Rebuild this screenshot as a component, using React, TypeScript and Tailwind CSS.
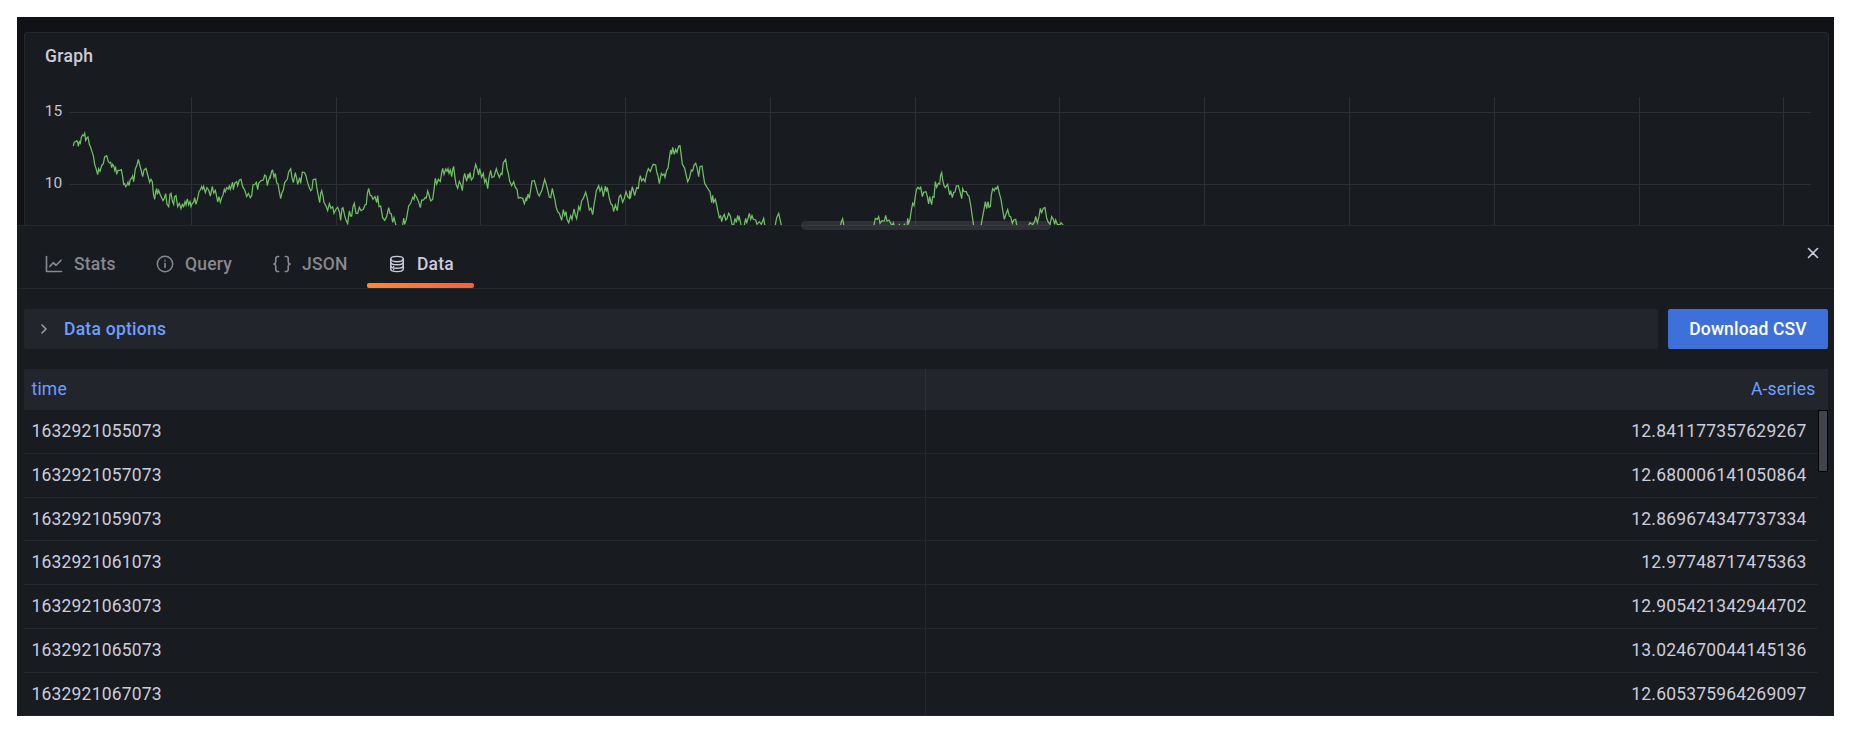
import React from "react";

type Segment = { dx: number; dy: number; pts: string };

// Series samples, stored in thirds of a pixel, one entry per captured stretch.
const segments: Segment[] = [
  {
    dx: 210,
    dy: 375,
    pts: "10,63 13,51 17,50 20,47 23,52 25,64 28,50 31,55 34,37 38,30 41,32 44,25 47,46 51,38 54,36 58,58 62,67 66,80 70,92 74,118 78,130 83,149 86,131 90,139 95,122 100,116 104,96 110,92 115,110 119,114 122,112 125,128 128,118 132,125 134,136 137,128 140,148 144,136 150,136 154,134 158,155 161,178 164,176 167,185 171,180 174,172 177,182 181,163 185,160 188,153 191,170 196,132 201,120 205,103 210,123 214,138 218,155 222,135 228,130 234,153 239,172 243,163 247,170 250,205 254,223 257,200 260,190 262,208 266,196 271,210 275,218 279,227 283,220 287,206 291,238 296,245 300,208 303,205 307,228 311,238 314,215 318,212 323,245 328,235 333,251 337,238 341,245 345,230 348,240 352,222 356,240 360,230 363,245 367,235 371,232 374,218 378,238 383,220 387,200 391,195 395,185 398,192 401,184 406,203 411,188 416,195 421,213 427,184 431,204 436,196 440,215 443,231 447,215 451,232 455,218 459,210 463,193 466,200 470,188 475,192 478,183 481,193 485,180 488,172 490,194 494,175 500,170 503,182 508,165 513,163 518,185 524,195 530,215 535,205 541,218 545,212 549,180 555,178 559,172 563,194 566,175 573,167 580,165 584,150 588,153 592,182 595,168 600,155",
  },
  {
    dx: 780,
    dy: 270,
    pts: "31,262 35,243 38,241 42,262 46,250 50,278 54,282 58,305 62,326 66,308 70,300 74,277 82,268 86,245 92,236 96,263 100,278 106,248 110,265 113,283 119,263 122,280 127,246 134,248 138,258 142,275 147,290 152,302 156,298 159,270 163,268 167,267 170,290 174,312 179,338 182,310 185,302 189,318 192,337 198,348 203,362 208,341 213,355 218,350 222,370 228,357 233,352 238,365 242,391 246,355 249,353 254,377 258,390 263,401 268,363 272,378 275,378 279,350 283,340 288,370 293,370 298,352 303,362 310,358 315,345 319,343 322,310 326,295 330,315 335,318 339,328 345,320 350,338 353,317 357,350 362,348 368,383 374,391 380,380 386,353 390,370 394,372 398,397 402,383 407,403 410,420 426,420 431,384 434,403 439,388 443,365 446,348 452,340 458,322 462,328 464,313 470,322 476,336 481,353 485,330 490,330 496,322 499,324 503,303 507,315 512,333 518,328 522,300 526,265 530,282 535,268 541,275 545,248 548,235 552,253 557,237 561,244 564,236 567,250 571,240 575,260 578,240 581,229 584,255 588,283 593,295 598,274 603,285 607,302 611,263 614,250 620,274 624,252 627,265 630,247 634,270 640,262 643,240 647,223 652,238 656,255 659,236 665,262 670,250 674,277 678,268 683,296 687,262 692,241 696,263 702,260 706,246 709,236 713,250 718,262 723,250 726,253 730,218 737,208 741,235 745,250 749,273 755,287 761,275 766,292 771,298 775,325 780,322 788,325 793,341 798,325 800,333 804,312 808,325 812,300 816,273 823,272 828,290 834,312",
  },
  {
    dx: 1560,
    dy: 270,
    pts: "58,318 62,308 66,300 70,285 74,268 78,280 83,300 88,322 92,323 97,295 100,310 105,330 108,350 113,365 118,370 125,391 130,359 134,376 138,365 141,388 146,398 152,377 156,388 162,357 166,375 170,386 176,350 180,360 185,332 190,325 197,307 202,325 208,360 213,355 218,374 222,345 226,322 229,302 236,287 240,303 245,292 250,320 256,288 259,305 262,292 268,325 273,342 277,345 281,365 286,345 292,362 297,322 302,315 308,337 313,325 318,305 323,320 328,325 329,302 331,325 337,290 344,317 350,293 355,295 358,270 361,257 365,273 370,266 375,275 380,250 385,236 391,245 396,230 400,223 407,225 410,245 414,258 418,281 424,250 428,256 432,252 435,262 440,240 444,235 448,205 452,180 455,193 458,172 463,193 467,178 471,187 476,168 480,167 483,190 487,222 494,235 499,258 503,275 508,265 514,240 518,243 522,226 527,220 531,232 536,260 540,230 546,228 550,255 554,280 560,290 566,300 570,305 575,338 578,316 581,337 586,328 590,345 594,365 598,383 602,378 605,395 609,380 613,373 617,390 621,386 626,370 631,378 636,403 641,405 645,385 649,398 653,376 656,388 658,382 663,404 668,420 672,410 677,385 680,400 688,370 692,388 696,377 700,388 707,390 711,403 718,395 724,403 731,385 736,415 764,415 770,383 776,370 780,388 785,410 790,450",
  },
  {
    dx: 2340,
    dy: 270,
    pts: "170,450 180,415 184,395 188,386 192,410 200,450 275,450 280,415 286,385 292,388 296,380 300,400 306,392 313,393 317,376 321,393 327,390 332,400 337,408 340,398 345,415 355,412 358,404 362,410 370,410 373,403 377,410 381,410 383,385 386,400 390,388 394,360 398,340 402,347 406,318 410,297 414,292 418,297 422,292 427,320 431,307 438,305 442,320 446,342 449,320 455,344 458,320 462,322 466,275 470,292 475,280 479,282 482,255 485,248 488,270 492,287 496,293 503,283 509,315 512,302 517,323 521,307 525,306 529,288 535,287 540,305 545,326 548,296 552,305 559,305 563,315 567,318 572,345 577,380 582,415 602,415 607,385 612,358 616,335 620,356 624,335 627,352 631,350 634,315 638,296 643,302 646,294 650,297 653,287 658,310 663,328 668,360 673,388 677,375 683,359 688,378 692,380 697,400 701,390 707,388 711,410 745,408 750,398 758,404 764,395 767,379 772,398 777,380 781,355 785,368 790,355 795,353 800,385 804,395 810,403 815,380 820,388 824,403 827,390 832,403 840,404 843,398 849,405 855,430",
  },
];

const linePoints = segments
  .flatMap((s) =>
    s.pts.split(" ").map((p) => {
      const [x, y] = p.split(",").map(Number);
      return `${((x + s.dx) / 3).toFixed(2)},${((y + s.dy) / 3).toFixed(2)}`;
    }),
  )
  .join(" ");

const gridX = [191, 336, 480, 625, 770, 915, 1059, 1204, 1349, 1494, 1639, 1783];

const rows: [string, string][] = [
  ["1632921055073", "12.841177357629267"],
  ["1632921057073", "12.680006141050864"],
  ["1632921059073", "12.869674347737334"],
  ["1632921061073", "12.97748717475363"],
  ["1632921063073", "12.905421342944702"],
  ["1632921065073", "13.024670044145136"],
  ["1632921067073", "12.605375964269097"],
];

const rowHeights = ["h-[44px]", "h-[44px]", "h-[43px]", "h-[44px]", "h-[44px]", "h-[44px]", "h-[43px]"];

function Icon({ children }: { children: React.ReactNode }) {
  return (
    <svg
      viewBox="0 0 24 24"
      className="h-5 w-5 shrink-0"
      fill="none"
      stroke="currentColor"
      strokeWidth="2"
      strokeLinecap="round"
      strokeLinejoin="round"
    >
      {children}
    </svg>
  );
}

const StatsIcon = () => (
  <Icon>
    <path d="M3 3v18h18" />
    <path d="M7 15l4-4.500 3.500 3L20.500 7.500" />
  </Icon>
);

const InfoIcon = () => (
  <Icon>
    <circle cx="12" cy="12" r="9.200" strokeWidth="1.800" />
    <path d="M12 11.500v4.500" />
    <circle cx="12" cy="8" r="0.300" />
  </Icon>
);

const BracketsIcon = () => (
  <Icon>
    <path d="M8 3H7a2.500 2.500 0 0 0-2.500 2.500v3.700A2.800 2.800 0 0 1 2.300 12a2.800 2.800 0 0 1 2.200 2.800v3.700A2.500 2.500 0 0 0 7 21h1" />
    <path d="M16 3h1a2.500 2.500 0 0 1 2.500 2.500v3.700a2.800 2.800 0 0 0 2.200 2.800 2.800 2.800 0 0 0-2.200 2.800v3.700A2.500 2.500 0 0 1 17 21h-1" />
  </Icon>
);

const DatabaseIcon = () => (
  <Icon>
    <g strokeWidth="1.700">
      <ellipse cx="12" cy="6" rx="7.500" ry="3.200" />
      <path d="M4.500 6v12c0 1.800 3.400 3.100 7.500 3.100s7.500-1.300 7.500-3.100V6" />
      <path d="M4.500 10c0 1.700 3.400 3 7.500 3s7.500-1.300 7.500-3M4.500 14c0 1.700 3.400 3 7.500 3s7.500-1.300 7.500-3" />
      <path d="M8 14.800v.1M8 18.600v.1" />
    </g>
  </Icon>
);

function Tab({ icon, label, width, active }: { icon: React.ReactNode; label: string; width: string; active?: boolean }) {
  return (
    <div className={`flex h-full flex-col ${width} ${active ? "text-[#ccccdc]" : "text-[#87888f]"}`}>
      <div className="flex flex-1 items-center gap-[10px] pl-5 pt-[18px] font-medium">
        {icon}
        <span>{label}</span>
      </div>
      {active ? (
        <div className="h-[5px] rounded-[2px] bg-linear-to-r from-[#ff8833] to-[#f55f3e]" />
      ) : (
        <div className="h-[5px]" />
      )}
    </div>
  );
}

function GraphPanel() {
  return (
    <div className="h-[208px] overflow-hidden bg-[#111217] pl-[7px] pr-[5px] pt-[15px]">
      <div className="h-[230px] rounded-[3px] border border-[#25272b] bg-[#181b1f]">
        <h2 className="h-[47px] pl-5 pt-[10px] font-medium leading-[26px] tracking-[0.3px]">Graph</h2>
        <svg viewBox="25 80 1803 145" className="block h-[145px] w-[1803px]">
          <g stroke="#2d3033" shapeRendering="crispEdges" strokeWidth="1">
            {gridX.map((x) => (
              <line key={x} x1={x + 0.5} x2={x + 0.5} y1="97" y2="225" />
            ))}
            <line x1="69" x2="1811" y1="112.5" y2="112.5" />
            <line x1="69" x2="1811" y1="184.5" y2="184.5" />
          </g>
          <polyline points={linePoints} fill="none" stroke="#73bf69" strokeWidth="1.250" />
          <g fill="#c3c3d2" fontSize="15.500" textAnchor="end">
            <text x="62.500" y="116">15</text>
            <text x="62.500" y="188">10</text>
          </g>
        </svg>
      </div>
    </div>
  );
}

function DataTable() {
  return (
    <div className="mt-5 ml-[7px] w-[1804px]">
      <div className="flex h-[41px] bg-[#22252b] text-[#6e9fff]">
        <div className="flex w-[902px] items-center border-r border-[#2c2f34] pl-[7.5px] pb-[2px]">time</div>
        <div className="flex flex-1 items-center justify-end pr-[12.5px] pb-[2px]">A-series</div>
      </div>
      <div className="flex">
        <div className="w-[1794px]">
          {rows.map(([time, value], i) => (
            <div key={time} className={`flex border-b border-[#25272c] ${rowHeights[i]}`}>
              <div className="w-[902px] border-r border-[#25272c] pl-[7.5px] pt-2">{time}</div>
              <div className="flex-1 pr-[11.5px] pt-2 text-right">{value}</div>
            </div>
          ))}
        </div>
        <div className="h-[62px] w-[10px] border border-black bg-[#42434b]" />
      </div>
    </div>
  );
}

export default function App() {
  return (
    <div className="h-[738px] w-[1855px] bg-white pl-[17px] pt-[17px]">
      <div className="relative h-[699px] w-[1817px] overflow-hidden bg-[#181b1f] font-['Roboto',sans-serif] text-[17.5px] leading-[26px] tracking-[0.1875px] text-[#ccccdc]">
        <GraphPanel />
        <div className="absolute left-[784px] top-[204px] h-[9px] w-[250px] rounded-full bg-[#ccccdc]/12" />
        <div className="flex h-[64px] border-y border-[#25272b] pl-[7px]">
          <Tab icon={<StatsIcon />} label="Stats" width="w-[111px]" />
          <Tab icon={<InfoIcon />} label="Query" width="w-[117px]" />
          <Tab icon={<BracketsIcon />} label="JSON" width="w-[115px]" />
          <Tab icon={<DatabaseIcon />} label="Data" width="w-[107px]" active />
          <div className="ml-auto pr-[11px] pt-[17px]">
            <svg viewBox="0 0 20 20" className="h-5 w-5" stroke="#ccccdc" strokeWidth="1.600" strokeLinecap="round">
              <path d="M5.500 5.500l9 9M14.500 5.500l-9 9" />
            </svg>
          </div>
        </div>
        <div className="mt-5 ml-[7px] flex w-[1804px] gap-[10px]">
          <div className="flex h-10 flex-1 items-center rounded-[2px] bg-[#22252b] font-medium tracking-[0.25px] text-[#6e9fff]">
            <svg
              viewBox="0 0 20 20"
              className="ml-[10px] mr-[10px] h-5 w-5 text-[#9a9ba6]"
              fill="none"
              stroke="currentColor"
              strokeWidth="1.600"
              strokeLinecap="round"
              strokeLinejoin="round"
            >
              <path d="M8 6l4 4-4 4" />
            </svg>
            Data options
          </div>
          <button className="h-10 w-[160px] rounded-[2px] bg-[#3d71d9] font-medium text-white">Download CSV</button>
        </div>
        <DataTable />
      </div>
    </div>
  );
}
